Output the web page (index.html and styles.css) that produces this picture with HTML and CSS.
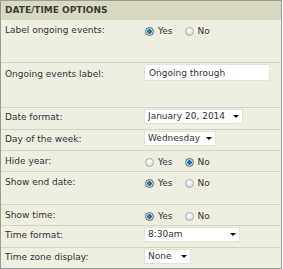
FILE: index.html
```html
<!DOCTYPE html>
<html lang="en">
<head>
    <meta charset="UTF-8">
    <meta name="viewport" content="width=device-width, initial-scale=1.0">
    <title>Date/Time Options</title>
    <link rel="stylesheet" href="styles.css">
</head>
<body>
    <div class="panel">
        <div class="panelHead">DATE/TIME OPTIONS</div>

        <div class="row first tall">
            <span class="label">Label ongoing events:</span>
            <div class="field">
                <label class="opt"><input type="radio" name="ongoing" checked> Yes</label>
                <label class="opt"><input type="radio" name="ongoing"> No</label>
            </div>
        </div>

        <div class="row taller">
            <span class="label">Ongoing events label:</span>
            <div class="field">
                <input type="text" class="textIn" value="Ongoing through">
            </div>
        </div>

        <div class="row sel">
            <span class="label">Date format:</span>
            <div class="field">
                <span class="pick"><select class="w-date"><option>January 20, 2014</option></select></span>
            </div>
        </div>

        <div class="row sel short">
            <span class="label">Day of the week:</span>
            <div class="field">
                <span class="pick"><select class="w-day"><option>Wednesday</option></select></span>
            </div>
        </div>

        <div class="row short">
            <span class="label">Hide year:</span>
            <div class="field">
                <label class="opt"><input type="radio" name="hideyear"> Yes</label>
                <label class="opt"><input type="radio" name="hideyear" checked> No</label>
            </div>
        </div>

        <div class="row mid">
            <span class="label">Show end date:</span>
            <div class="field">
                <label class="opt"><input type="radio" name="enddate" checked> Yes</label>
                <label class="opt"><input type="radio" name="enddate"> No</label>
            </div>
        </div>

        <div class="row short">
            <span class="label">Show time:</span>
            <div class="field">
                <label class="opt"><input type="radio" name="showtime" checked> Yes</label>
                <label class="opt"><input type="radio" name="showtime"> No</label>
            </div>
        </div>

        <div class="row sel">
            <span class="label">Time format:</span>
            <div class="field">
                <span class="pick"><select class="w-time"><option>8:30am</option></select></span>
            </div>
        </div>

        <div class="row sel short">
            <span class="label">Time zone display:</span>
            <div class="field">
                <span class="pick"><select class="w-tz"><option>None</option></select></span>
            </div>
        </div>
    </div>
</body>
</html>
```

FILE: styles.css
```css
body {
    margin: 0;
    background-color: #fff;
    font-family: "DejaVu Sans", Verdana, sans-serif;
    font-size: 9px;
    color: #333;
}

.panel {
    width: 282px;
    box-sizing: border-box;
    border: 1px solid #9a9a9a;
    background-color: #efefe1;
}

.panelHead {
    height: 19px;
    box-sizing: border-box;
    padding: 4px 0 0 4px;
    background-color: #d9d8c0;
    font-weight: bold;
    color: #3c3c3c;
}

.row {
    display: grid;
    grid-template-columns: 143px 1fr;
    height: 22px;
    box-sizing: border-box;
    border-top: 1px solid #d2d2c6;
    padding-top: 5px;
}

.row.first {
    border-top: none;
}

.row.short { height: 21px; }
.row.mid { height: 33px; }
.row.tall { height: 42px; padding-top: 5px; }
.row.taller { height: 45px; padding-top: 3px; }

.row.sel {
    padding-top: 2px;
}

.row.sel .label {
    padding-top: 2px;
}

.row.taller .label {
    padding-top: 3px;
}

.label {
    padding-left: 4px;
    white-space: nowrap;
}

.field {
    display: flex;
    align-items: center;
    height: 12px;
}

.opt {
    display: flex;
    align-items: center;
    margin-right: 11px;
}

.opt input {
    appearance: none;
    width: 9px;
    height: 9px;
    margin: 0 4px 0 1px;
    border-radius: 50%;
    border: 1px solid #adadad;
    background: radial-gradient(circle at 50% 30%, #fff 0, #eaeaea 50%, #cfcfcf 100%);
}

.opt input:checked {
    border-color: #666;
    background: radial-gradient(circle, #1a8cc8 0, #0b5f99 40%, #c8d4dc 48%, #e6e6e6 100%);
}

.textIn {
    width: 126px;
    height: 17px;
    box-sizing: border-box;
    margin: 1px 0 0 0;
    padding: 0 4px;
    border: 1px solid #e2e2da;
    background-color: #fff;
    font-family: inherit;
    font-size: 9px;
    color: #333;
}

.pick {
    position: relative;
    display: inline-block;
}

.pick select {
    appearance: none;
    height: 15px;
    box-sizing: border-box;
    padding: 0 0 0 3px;
    border: 1px solid #e2e2da;
    border-radius: 0;
    background-color: #fff;
    font-family: inherit;
    font-size: 9px;
    color: #333;
}

.pick::after {
    content: "";
    position: absolute;
    right: 4px;
    top: 6px;
    border-left: 3px solid transparent;
    border-right: 3px solid transparent;
    border-top: 3px solid #111;
}

.w-date { width: 99px; }
.w-day { width: 72px; }
.w-time { width: 96px; }
.w-tz { width: 47px; }
```
